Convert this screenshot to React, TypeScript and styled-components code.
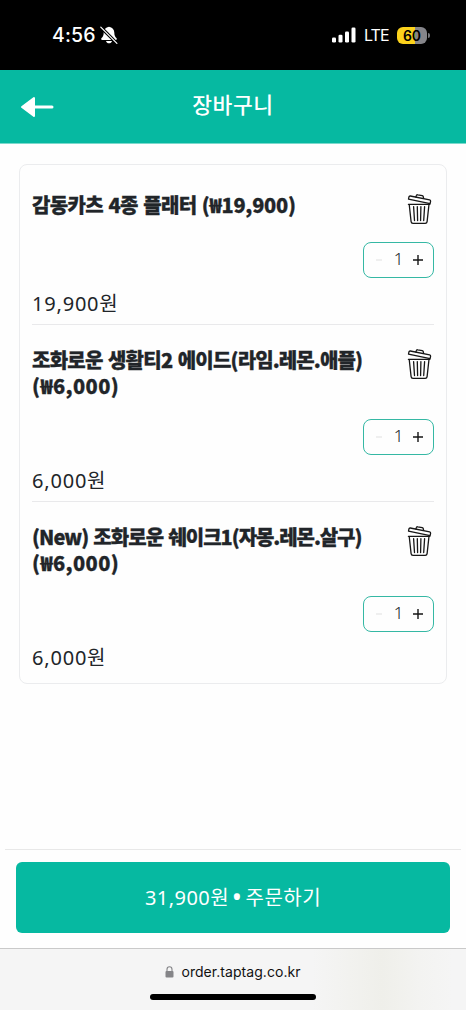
import React from 'react';
import styled, { createGlobalStyle } from 'styled-components';

const GlobalStyle = createGlobalStyle`
  *, *::before, *::after { box-sizing: border-box; }
  body {
    margin: 0;
    background: #fefefe;
    color: #212529;
    font-family: 'Noto Sans', 'Noto Sans CJK KR', sans-serif;
  }
  button { font: inherit; color: inherit; background: none; border: 0; padding: 0; }
`;

const Screen = styled.div`
  display: flex;
  flex-direction: column;
  height: 1010px;
  width: 466px;
  overflow: hidden;
`;

const StatusBar = styled.div`
  height: 70px;
  flex: none;
  background: #000;
  color: #fff;
  display: flex;
  justify-content: space-between;
  padding: 0 36px 0 52px;
  font-family: Inter, sans-serif;
`;

const StatusGroup = styled.div`
  display: flex;
  align-items: center;
  height: 70px;
`;

const Clock = styled.span`
  font-size: 19.5px;
  font-weight: 500;
  letter-spacing: 0.2px;
  width: 48px;
  white-space: nowrap;
`;

const Network = styled.span`
  font-size: 16px;
  font-weight: 400;
  letter-spacing: -0.9px;
  margin: 0 8px 0 8px;
  width: 25px;
`;

const Battery = styled.div`
  width: 30px;
  height: 17px;
  border-radius: 6px;
  background: linear-gradient(90deg, #fbd21c 0 60%, #85858a 60%);
  color: #000;
  font-size: 14px;
  line-height: 17px;
  font-weight: 600;
  text-align: center;
`;

const BatteryTip = styled.div`
  width: 2px;
  height: 5px;
  margin-left: 1px;
  background: #77777b;
  border-radius: 0 2px 2px 0;
`;

const Header = styled.header`
  flex: none;
  height: 74px;
  background: #06b9a1;
  color: #fff;
  display: grid;
  grid-template-columns: 60px 1fr 60px;
  align-items: center;
  border-bottom: 1px solid #7bd9cc;
`;

const BackButton = styled.button`
  display: flex;
  padding-left: 20px;
`;

const Title = styled.h1`
  margin: 0;
  text-align: center;
  font-size: 21.5px;
  line-height: 30px;
  font-weight: 500;
  letter-spacing: 0.6px;
  padding-bottom: 4px;
`;

const Content = styled.main`
  flex: 1;
  padding: 20px 19px 0;
`;

const Card = styled.section`
  height: 520px;
  border: 1px solid #ebecee;
  border-radius: 8px;
  padding: 4px 12px 0;
`;

const Item = styled.article`
  padding: 23px 0 7px;
  & + & { border-top: 1px solid #e9e9eb; padding-top: 22px; }
`;

const ItemHead = styled.div`
  display: flex;
  justify-content: space-between;
  min-height: 50px;
  padding-bottom: 20px;
`;

const ItemName = styled.h2`
  margin: 0;
  font-family: 'Noto Sans CJK KR', sans-serif;
  font-weight: 900;
  font-size: 20px;
  line-height: 26px;
  word-spacing: 1.5px;
  -webkit-text-stroke: 0.3px #212529;
`;

const NameLine = styled.span`
  display: block;
  white-space: pre;
`;

const NamePart = styled.span<{ $spacing: number }>`
  letter-spacing: ${(p) => p.$spacing}px;
`;

const TrashButton = styled.button`
  flex: none;
  display: block;
  width: 25px;
  height: 32px;
  margin: 1px 2px -3px 0;
`;

const Stepper = styled.div`
  margin-left: auto;
  width: 71px;
  height: 36px;
  border: 1.5px solid #35b8a4;
  border-radius: 8px;
  display: grid;
  grid-template-columns: 29px 11px 28px;
  align-items: center;
  justify-items: center;
`;

const Quantity = styled.span`
  font-size: 17px;
  line-height: 20px;
  padding-bottom: 3px;
  font-weight: 300;
`;

const StepButton = styled.button`
  display: flex;
  color: #151515;
  &:disabled { color: #e6e6e6; }
`;

const Price = styled.p`
  margin: 11px 0 0;
  font-size: 20px;
  line-height: 29px;
  height: 28px;
  letter-spacing: 0.8px;
`;

const OrderBar = styled.div`
  height: 99px;
  flex: none;
  margin: 0 5px;
  padding: 12px 11px 0;
  border-top: 1px solid #e8e8e8;
`;

const OrderButton = styled.button`
  display: flex;
  align-items: center;
  justify-content: center;
  width: 434px;
  height: 71px;
  padding-bottom: 3px;
  border-radius: 6px;
  background: #06b9a1;
  color: #fff;
  font-size: 20px;
  letter-spacing: 0.45px;
  white-space: pre;
`;

const Dot = styled.span`
  width: 6px;
  height: 6px;
  font-size: 27px;
  line-height: 8px;
  display: flex;
  justify-content: center;
  margin: 0 5.5px 0 5px;
`;

const OrderLabel = styled.span`
  font-weight: 400;
`;

const BrowserBar = styled.footer`
  height: 62px;
  flex: none;
  border-top: 1px solid #c9c9c9;
  background: linear-gradient(90deg, #f5f5f5 67%, #f2f2ef 75%, #efefea 82%, #f3f3f1 90%, #f5f5f5 97%);
  display: flex;
  flex-direction: column;
  align-items: center;
  color: #111;
  font-family: Inter, sans-serif;
`;

const Address = styled.div`
  display: flex;
  align-items: center;
  gap: 7px;
  height: 45px;
  font-size: 14px;
  letter-spacing: 0.05px;
`;

const HomeIndicator = styled.div`
  width: 166px;
  height: 6px;
  border-radius: 3px;
  background: #000;
`;

const MutedBell = () => (
  <svg width="18" height="18" viewBox="0 0 18 18">
    <path d="M9 .8C5.700 1.400 3.700 3.400 3.700 6.600c0 3.200-.9 4.400-2.300 5.700-.5.600-.2 1.600.7 1.600h13.800c.9 0 1.200-1 .7-1.600-1.400-1.300-2.300-2.500-2.300-5.700C14.300 3.400 12.300 1.400 9 .8Z" fill="#fff" />
    <path d="M6 15h6c-.4 1.600-1.600 2.300-3 2.300S6.400 16.600 6 15Z" fill="#fff" />
    <path d="M.8 1.200 16.900 17.300" stroke="#000" strokeWidth="3.200" />
    <path d="M.8 1.200 16.900 17.300" stroke="#fff" strokeWidth="1.200" strokeLinecap="round" />
  </svg>
);

const Signal = () => (
  <svg width="24" height="16" viewBox="0 0 24 16" fill="#fff">
    <rect x="0" y="10.500" width="4" height="5" rx="1.300" />
    <rect x="6.500" y="7.800" width="4" height="7.700" rx="1.300" />
    <rect x="13" y="4.500" width="4" height="11" rx="1.300" />
    <rect x="19.500" y="0.500" width="4" height="15" rx="1.300" />
  </svg>
);

const BackArrow = () => (
  <svg width="34" height="22" viewBox="0 0 34 22">
    <path d="M2 11 14 2v18Z" fill="#fff" stroke="#fff" strokeWidth="2" strokeLinejoin="round" />
    <path d="M13 11h19" stroke="#fff" strokeWidth="3" strokeLinecap="round" />
  </svg>
);

const Trash = () => (
  <svg width="25" height="32" viewBox="0 0 25 32" fill="none" stroke="#171717" strokeWidth="1.300" strokeLinejoin="round" strokeLinecap="round">
    <path d="M1.900 4c.2-.8.6-1.100 1.400-1l19.300 3.900c.8.200 1.100.7 1 1.400l-.5 2.300L1.500 6.200Z" />
    <path d="M8.800 3.900 9.600 2.300c.2-.5.6-.6 1.100-.5l4.600.8c.5.100.8.4.9.9l.4 1.900" />
    <path d="M1.400 11.300h21.400M2.200 11.300l1.900 17.300c.1 1.100.8 1.700 1.900 1.700h12.200c1.100 0 1.800-.6 1.900-1.700L22 11.300" />
    <path d="m6.600 13.600.9 13.900M10.300 13.600l.3 13.900M13.900 13.600l-.3 13.900M17.600 13.600l-.9 13.900" />
  </svg>
);

const Minus = () => (
  <svg width="10" height="10" viewBox="0 0 10 10" stroke="currentColor" strokeWidth="1.300"><path d="M2 5h6" /></svg>
);

const Plus = () => (
  <svg width="10" height="10" viewBox="0 0 10 10" stroke="currentColor" strokeWidth="1.400"><path d="M0 5h10M5 0v10" /></svg>
);

const Lock = () => (
  <svg width="9" height="12" viewBox="0 0 9 12">
    <path d="M2 6V3.500a2.500 2.700 0 0 1 5 0V6" fill="none" stroke="#858588" strokeWidth="1.100" />
    <rect x="0.500" y="5" width="8" height="6.500" rx="1.100" fill="#858588" />
  </svg>
);

type Part = { text: string; spacing: number };

const items: { lines: Part[][]; price: string }[] = [
  {
    lines: [[
      { text: '감동카츠 4종 플래터 ', spacing: -0.65 },
      { text: '(₩19,900)', spacing: -0.25 },
    ]],
    price: '19,900원',
  },
  {
    lines: [
      [
        { text: '조화로운 생활티2 에이드', spacing: -0.75 },
        { text: '(라임.레몬.애플)', spacing: -0.9 },
      ],
      [{ text: '(₩6,000)', spacing: 0.4 }],
    ],
    price: '6,000원',
  },
  {
    lines: [
      [
        { text: '(New) 조화로운 쉐이크1', spacing: -0.95 },
        { text: '(자몽.레몬.살구)', spacing: -1.1 },
      ],
      [{ text: '(₩6,000)', spacing: 0.4 }],
    ],
    price: '6,000원',
  },
];

export default function App() {
  return (
    <>
      <GlobalStyle />
      <Screen>
        <StatusBar>
          <StatusGroup><Clock>4:56</Clock><MutedBell /></StatusGroup>
          <StatusGroup>
            <Signal />
            <Network>LTE</Network>
            <Battery>60</Battery>
            <BatteryTip />
          </StatusGroup>
        </StatusBar>
        <Header>
          <BackButton aria-label="뒤로"><BackArrow /></BackButton>
          <Title>장바구니</Title>
        </Header>
        <Content>
          <Card>
            {items.map((item, i) => (
              <Item key={i}>
                <ItemHead>
                  <ItemName>
                    {item.lines.map((line, n) => (
                      <NameLine key={n}>
                        {line.map((part) => (
                          <NamePart key={part.text} $spacing={part.spacing}>{part.text}</NamePart>
                        ))}
                      </NameLine>
                    ))}
                  </ItemName>
                  <TrashButton aria-label="삭제"><Trash /></TrashButton>
                </ItemHead>
                <Stepper>
                  <StepButton disabled aria-label="빼기"><Minus /></StepButton>
                  <Quantity>1</Quantity>
                  <StepButton aria-label="더하기"><Plus /></StepButton>
                </Stepper>
                <Price>{item.price}</Price>
              </Item>
            ))}
          </Card>
        </Content>
        <OrderBar>
          <OrderButton>
            <OrderLabel>31,900원</OrderLabel>
            <Dot>•</Dot>
            <OrderLabel>주문하기</OrderLabel>
          </OrderButton>
        </OrderBar>
        <BrowserBar>
          <Address><Lock />order.taptag.co.kr</Address>
          <HomeIndicator />
        </BrowserBar>
      </Screen>
    </>
  );
}
